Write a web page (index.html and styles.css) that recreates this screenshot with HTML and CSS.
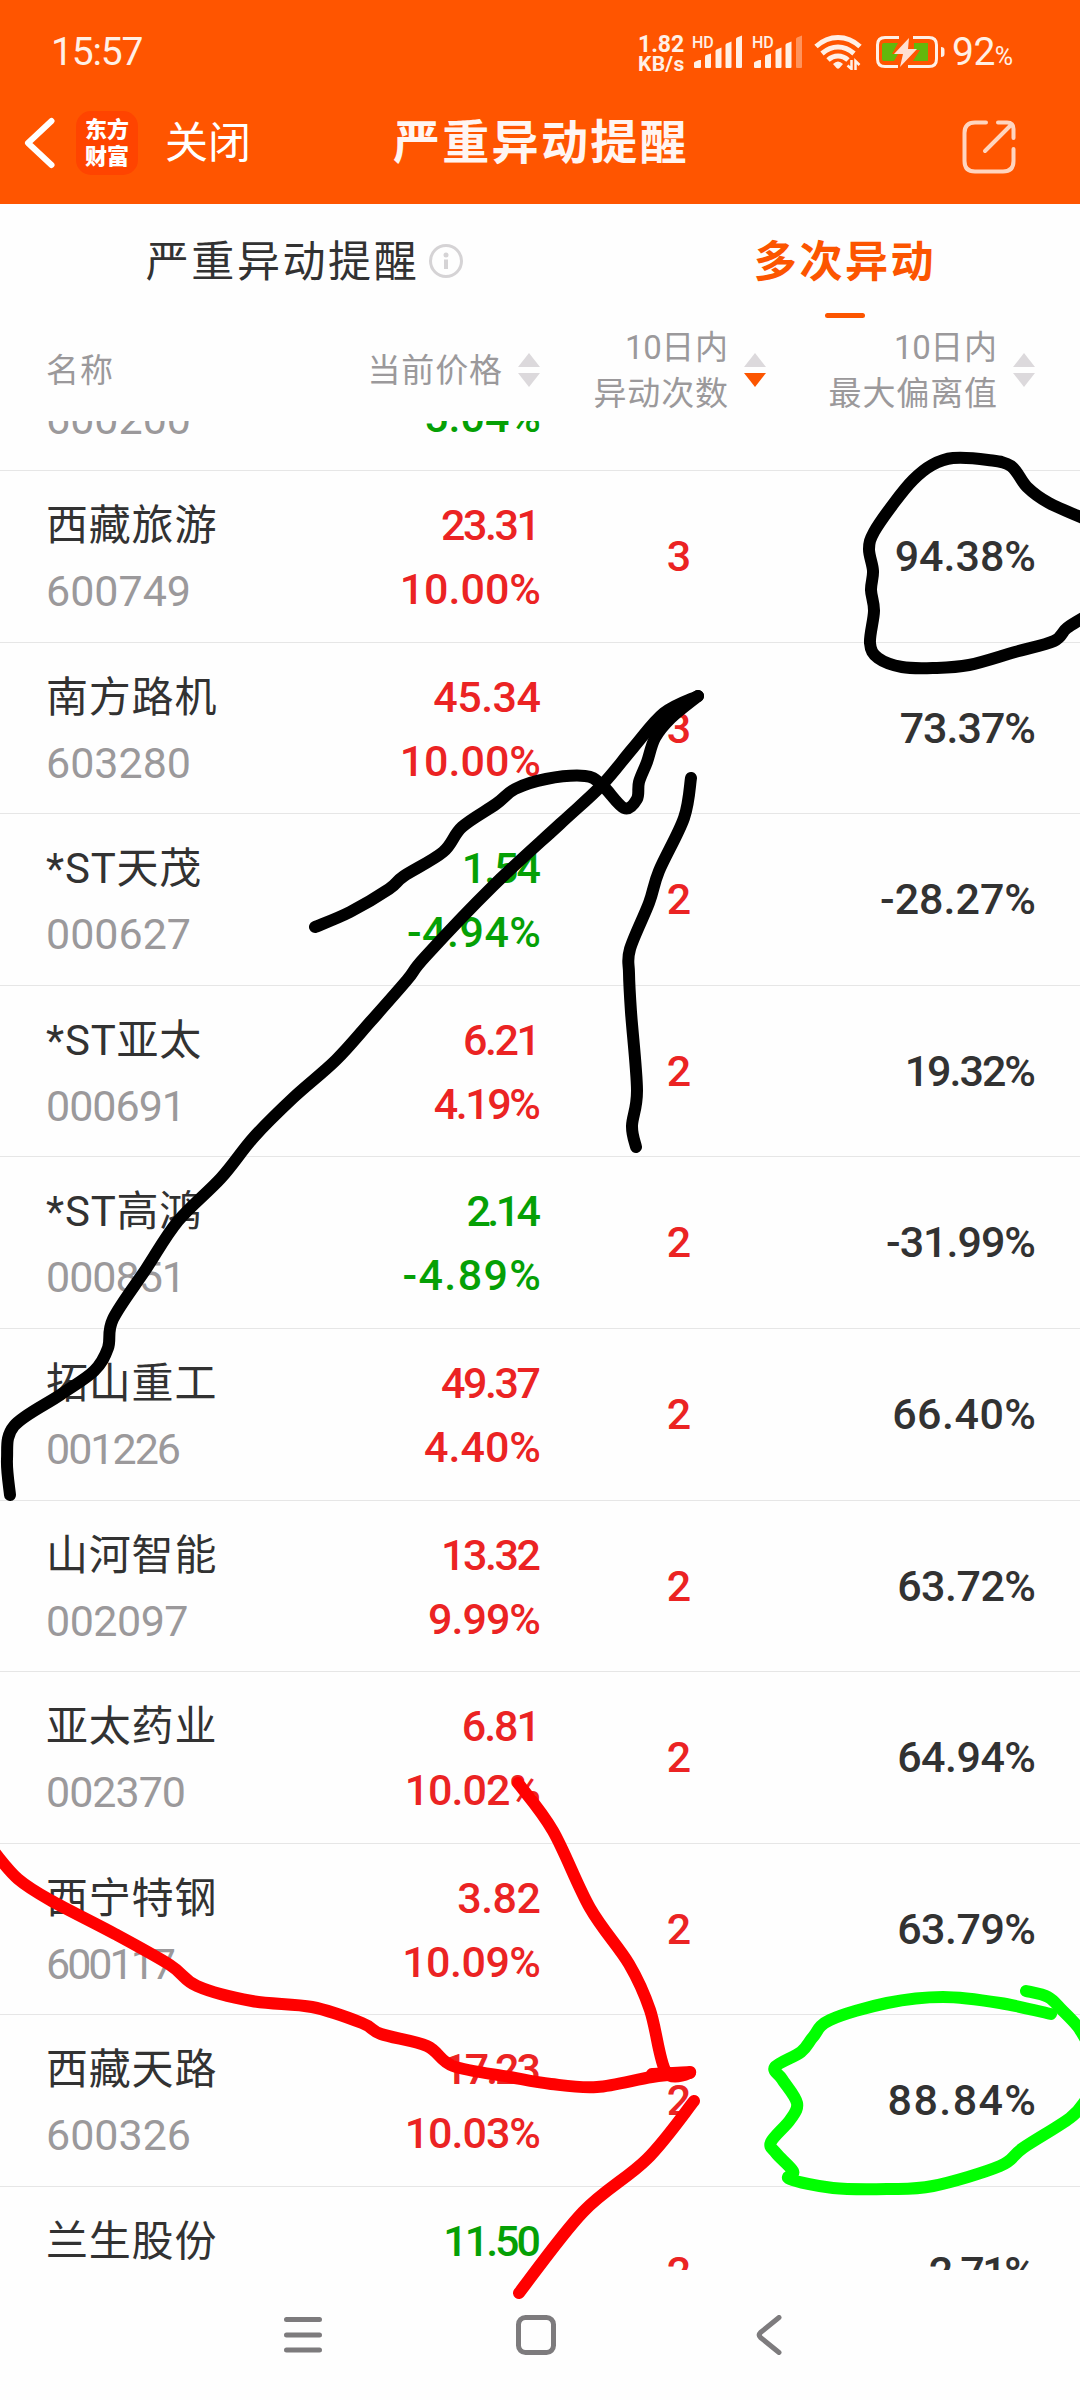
FILE: index.html
```html
<!DOCTYPE html>
<html lang="zh-CN">
<head>
<meta charset="utf-8">
<title>严重异动提醒</title>
<link rel="stylesheet" href="styles.css">
</head>
<body>
<div class="screen">
  <header class="top">
    <div class="status">
      <span class="time">15:57</span>
      <div class="rate"><span class="rate-num">1.82</span><span class="rate-unit">KB/s</span></div>
      <div class="signal"><span class="hd">HD</span>
        <svg width="50" height="34" viewBox="0 0 50 34"><path d="M1 32V28Q1 27 2 26.700L6 25H8V32Q8 33 7 33H2Q1 33 1 32ZM12 32V22Q12 20.500 13 20L18 18.500V32Q18 33 17 33H13Q12 33 12 32ZM22.500 32V16Q22.500 15 23.500 14.500L28.500 12.500V32Q28.500 33 27.500 33H23.500Q22.500 33 22.500 32ZM32.500 32V10Q32.500 9 33.500 8.500L38.500 6.500V32Q38.500 33 37.500 33H33.500Q32.500 33 32.500 32ZM43 32V4Q43 3 44 2.500L49 .5V32Q49 33 48 33H44Q43 33 43 32Z"/></svg>
      </div>
      <div class="signal second"><span class="hd">HD</span>
        <svg width="50" height="34" viewBox="0 0 50 34"><path d="M1 32V28Q1 27 2 26.700L6 25H8V32Q8 33 7 33H2Q1 33 1 32ZM12 32V22Q12 20.500 13 20L18 18.500V32Q18 33 17 33H13Q12 33 12 32ZM22.500 32V16Q22.500 15 23.500 14.500L28.500 12.500V32Q28.500 33 27.500 33H23.500Q22.500 33 22.500 32ZM32.500 32V10Q32.500 9 33.500 8.500L38.500 6.500V32Q38.500 33 37.500 33H33.500Q32.500 33 32.500 32Z"/><path class="weak" d="M43 32V4Q43 3 44 2.500L49 .5V32Q49 33 48 33H44Q43 33 43 32Z"/></svg>
      </div>
      <svg class="wifi" width="48" height="36" viewBox="0 0 48 36">
        <g fill="none" stroke="currentColor" stroke-width="5"><path d="M2 12.500Q12 3.500 24 3.500T46 12.500"/><path d="M8 19.500Q15.500 13 24 13T40 19.500"/><path d="M14 26Q18.500 22 24 22T34 26"/></g>
        <path d="M19 30Q24 25 29 30L25.500 34Q24 35.500 22.500 34Z"/>
        <path d="M37.500 26V35L33.500 31.500M41.500 36V27L45.500 31" fill="none" stroke="currentColor" stroke-width="2.500"/>
      </svg>
      <svg class="battery" width="72" height="36" viewBox="0 0 72 36">
        <path d="M25 3.500H11Q3.500 3.500 3.500 11V25Q3.500 32.500 11 32.500H24M39 3.500H55Q62.500 3.500 62.500 11V25Q62.500 32.500 55 32.500H34" fill="none" stroke="currentColor" stroke-width="3"/>
        <path d="M67 13Q70.500 13 70.500 16V20Q70.500 23 67 23Z"/>
        <path fill="#63b80c" d="M10 9H24L18 20H24L20 27H10Q8 27 8 25V11Q8 9 10 9ZM40 9H54V27H39L46 16H40Z"/>
        <path fill="#ffe0d2" d="M35 4L20 20H29L26 33L43 15H34Z"/>
      </svg>
      <span class="level">92<small>%</small></span>
    </div>
    <div class="bar">
      <svg class="back" width="32" height="54" viewBox="0 0 32 54"><path d="M28.500 5L5 27L28.500 49"/></svg>
      <div class="logo"><span>东方</span><span>财富</span></div>
      <span class="close">关闭</span>
      <h1 class="title">严重异动提醒</h1>
      <svg class="share" width="56" height="56" viewBox="0 0 56 56"><path d="M25 3.500H14Q3.500 3.500 3.500 14V42Q3.500 52.500 14 52.500H42Q52.500 52.500 52.500 42V30M37 3.500H46Q52.500 3.500 52.500 10V19M50.500 5.500L24 32"/></svg>
    </div>
  </header>

  <nav class="tabs">
    <div class="tab"><span class="tab-text">严重异动提醒</span>
      <svg class="info" width="36" height="36" viewBox="0 0 36 36"><circle cx="18" cy="18" r="15.500" fill="none" stroke="#d5d3d5" stroke-width="3"/><circle cx="18" cy="12" r="2.500"/><path d="M16 16.500H20V26H16Z"/></svg>
    </div>
    <div class="tab active"><span class="tab-text">多次异动</span></div>
  </nav>

  <div class="head">
    <div class="h-name">名称</div>
    <div class="h-cell"><span>当前价格</span><svg class="sort" width="22" height="34" viewBox="0 0 22 34"><path d="M11 0L22 14H0Z"/><path d="M11 34L22 20H0Z"/></svg></div>
    <div class="h-cell"><span><em>10</em>日内<br>异动次数</span><svg class="sort" width="22" height="34" viewBox="0 0 22 34"><path d="M11 0L22 14H0Z"/><path class="on" d="M11 34L22 20H0Z"/></svg></div>
    <div class="h-cell"><span><em>10</em>日内<br>最大偏离值</span><svg class="sort" width="22" height="34" viewBox="0 0 22 34"><path d="M11 0L22 14H0Z"/><path d="M11 34L22 20H0Z"/></svg></div>
  </div>

  <main class="list">
    <div class="row first"><div class="stock"><b></b><i>600200</i></div><div class="price down"><span></span><span>5.04%</span></div><div class="count"></div><div class="ratio"></div></div>
    <div class="row"><div class="stock"><b>西藏旅游</b><i>600749</i></div><div class="price"><span class="tight-5">23.31</span><span>10.00%</span></div><div class="count">3</div><div class="ratio">94.38%</div></div>
    <div class="row"><div class="stock"><b>南方路机</b><i>603280</i></div><div class="price"><span class="tight-1">45.34</span><span>10.00%</span></div><div class="count">3</div><div class="ratio tight-2">73.37%</div></div>
    <div class="row"><div class="stock"><b>*ST天茂</b><i>000627</i></div><div class="price down"><span class="tight-4">1.54</span><span class="loose-1">-4.94%</span></div><div class="count">2</div><div class="ratio">-28.27%</div></div>
    <div class="row"><div class="stock"><b>*ST亚太</b><i class="tight-2">000691</i></div><div class="price"><span class="tight-5">6.21</span><span class="tight-5">4.19%</span></div><div class="count">2</div><div class="ratio tight-4">19.32%</div></div>
    <div class="row"><div class="stock"><b>*ST高鸿</b><i class="tight-2">000851</i></div><div class="price down"><span class="tight-7">2.14</span><span class="loose-3">-4.89%</span></div><div class="count">2</div><div class="ratio tight-2">-31.99%</div></div>
    <div class="row"><div class="stock"><b>拓山重工</b><i class="tight-4">001226</i></div><div class="price"><span class="tight-5">49.37</span><span>4.40%</span></div><div class="count">2</div><div class="ratio loose-1">66.40%</div></div>
    <div class="row"><div class="stock"><b>山河智能</b><i class="tight-1">002097</i></div><div class="price"><span class="tight-5">13.32</span><span class="tight-2">9.99%</span></div><div class="count">2</div><div class="ratio tight-1">63.72%</div></div>
    <div class="row"><div class="stock"><b>亚太药业</b><i class="tight-2">002370</i></div><div class="price"><span class="tight-4">6.81</span><span class="tight-2">10.02%</span></div><div class="count">2</div><div class="ratio tight-1">64.94%</div></div>
    <div class="row"><div class="stock"><b>西宁特钢</b><i class="tight-6">600117</i></div><div class="price"><span class="tight-1">3.82</span><span class="tight-1">10.09%</span></div><div class="count">2</div><div class="ratio tight-1">63.79%</div></div>
    <div class="row"><div class="stock"><b>西藏天路</b><i>600326</i></div><div class="price"><span class="tight-6">17.23</span><span class="tight-2">10.03%</span></div><div class="count">2</div><div class="ratio loose-3">88.84%</div></div>
    <div class="row"><div class="stock"><b>兰生股份</b><i></i></div><div class="price down"><span class="tight-6">11.50</span><span></span></div><div class="count">2</div><div class="ratio tight-5">2.71%</div></div>
  </main>

  <footer class="nav">
    <svg width="40" height="40" viewBox="0 0 40 40"><path d="M3.500 4.500H36.500M3.500 20H36.500M3.500 35H36.500"/></svg>
    <svg width="40" height="40" viewBox="0 0 40 40"><rect x="2.500" y="2.500" width="35" height="35" rx="7"/></svg>
    <svg width="40" height="40" viewBox="0 0 40 40"><path d="M30 2.500L11.500 17.500Q9 20 11.500 22.500L30 37.500"/></svg>
  </footer>

  <svg class="ink" width="1080" height="2400" viewBox="0 0 1080 2400">
    <path class="black" data-points="1090,521 1049,503 1027,487 1011,466 988,460 953,458 932,465 913,480 894,503 874,532 869,549 873,571 871,590 874,611 870,643 878,658 902,667 933,668 969,665 1015,652 1054,641 1067,628 1090,614"/>
    <path class="black" data-points="315,927 350,912 389,889 404,876 443,852 462,827 496,804 515,789 546,779 585,776 602,785 624,808 637,799 639,782 647,762 655,738 671,718 698,696"/>
    <path class="black" data-points="698,696 664,713 633,748 602,785 560,824 493,886 425,957 407,980 371,1021 336,1060 293,1098 254,1137 221,1178 178,1221 146,1269 113,1319 108,1348 94,1371 60,1395 14,1426 7,1459 10,1495"/>
    <path class="black" data-points="691,778 684,818 659,871 649,903 630,949 629,973 631,1012 637,1090 632,1126 636,1147"/>
    <path class="red" data-points="-5,1853 18,1879 50,1900 115,1934 170,1965 197,1986 252,2001 312,2007 362,2023 381,2034 427,2046 453,2066 510,2077 551,2084 597,2087 652,2077 690,2073"/>
    <path class="red" data-points="518,1783 553,1831 590,1908 629,1964 650,2010 666,2072 690,2072 652,2074"/>
    <path class="red" data-points="694,2101 647,2159 583,2212 519,2293"/>
    <path class="green" data-points="1051,2014 1000,2003 943,1997 887,2003 830,2020 813,2037 801,2052 775,2067 782,2079 797,2103 790,2120 771,2142 776,2153 793,2171 790,2179 833,2188 887,2189 933,2186 1000,2166 1023,2148 1070,2118 1086,2100"/>
    <path class="green" data-points="1026,1991 1048,1997 1062,2010 1078,2027 1090,2047"/>
  </svg>
</div>
<script src="ink.js"></script>
</body>
</html>
```
FILE: ink.js
```
// Draws each pen stroke as a smooth curve through its sampled points.
document.querySelectorAll('.ink path').forEach(function (path) {
  var p = path.dataset.points.split(' ').map(function (s) { return s.split(',').map(Number); });
  var d = 'M' + p[0];
  for (var i = 0; i < p.length - 1; i++) {
    var a = p[i - 1] || p[i], b = p[i], c = p[i + 1], e = p[i + 2] || c;
    d += 'C' + [b[0] + (c[0] - a[0]) / 6, b[1] + (c[1] - a[1]) / 6,
                c[0] - (e[0] - b[0]) / 6, c[1] - (e[1] - b[1]) / 6, c[0], c[1]];
  }
  path.setAttribute('d', d);
});
```
FILE: styles.css
```css
* { box-sizing: border-box; margin: 0; padding: 0; }
body { background: #fff; font-family: Roboto, "Noto Sans CJK SC", sans-serif; color: #323232; }
svg { display: block; flex: none; }
.screen { position: relative; width: 1080px; height: 2400px; overflow: hidden; background: #fefefe; display: flex; flex-direction: column; }

.top { height: 204px; background: #ff5500; color: #fff0e6; }
.status { height: 104px; display: flex; padding-left: 51px; fill: currentColor; }
.time { width: 587px; font-size: 39px; line-height: 105px; letter-spacing: -1.2px; }
.rate { width: 53px; padding-top: 33px; font-weight: 700; white-space: nowrap; }
.rate span { display: block; }
.rate-num { font-size: 23px; line-height: 23px; letter-spacing: 0; }
.rate-unit { font-size: 21px; line-height: 16px; letter-spacing: .3px; }
.signal { position: relative; width: 60px; padding: 35px 0 0 2px; }
.signal .hd { position: absolute; left: 1px; top: 34px; font-size: 16px; line-height: 18px; font-weight: 500; }
.weak { opacity: .4; }
.wifi { margin: 34px 0 0 3px; }
.battery { margin: 34px 0 0 12px; }
.level { font-size: 39px; line-height: 105px; margin-left: 6px; letter-spacing: -.5px; }
.level small { font-size: 25px; }

.bar { height: 78px; display: flex; align-items: center; padding-left: 23px; }
.back { fill: none; stroke: #fff; stroke-width: 6; stroke-linecap: round; stroke-linejoin: round; }
.logo { width: 62px; height: 64px; margin-left: 21px; border-radius: 15px; background: #ff4400; color: #fff; font-size: 22px; font-weight: 900; line-height: 27px; display: flex; flex-direction: column; align-items: center; justify-content: center; }
.close { width: 228px; margin-left: 27px; font-size: 43px; line-height: 60px; color: #fff; }
.title { width: 568px; font-size: 47px; line-height: 60px; font-weight: 700; letter-spacing: 2.3px; color: #fff5f2; }
.share { margin-top: 8px; fill: none; stroke: #ffd5bf; stroke-width: 4; stroke-linecap: round; stroke-linejoin: round; }

.tabs { height: 114px; display: grid; grid-template-columns: 610px 470px; font-size: 43px; letter-spacing: 2.6px; }
.tab { display: flex; justify-content: center; padding-top: 26px; line-height: 64px; }
.info { margin: 13px 0 0 9px; fill: #d5d3d5; }
.active { position: relative; font-weight: 700; color: #fc5500; }
.active::after { content: ""; position: absolute; left: 215px; top: 109px; width: 40px; height: 5px; border-radius: 3px; background: #fc5500; }

.head { height: 103px; display: grid; grid-template-columns: 340px 200px 226px 269px; align-items: center; color: #9b999b; font-size: 33px; line-height: 46px; letter-spacing: .9px; }
.head em { font-style: normal; letter-spacing: -.5px; }
.head .h-name, .head span { padding-top: 2px; }
.h-name { padding-left: 46px; }
.h-cell { display: flex; justify-content: flex-end; align-items: center; gap: 15px; text-align: right; }
.sort { fill: #dcd9dc; }
.sort .on { fill: #fc5500; }

.list { height: 1849px; overflow: hidden; }
.row { height: 171.6px; border-top: 1px solid #e6e6e6; display: grid; grid-template-columns: 340px 201px 276px 219px; font-size: 43px; }
.row.first { margin-top: -122.6px; }
.stock { padding: 22px 0 0 46px; }
.stock b, .stock i { display: block; font-weight: 400; font-style: normal; height: 65px; line-height: 66px; }
.stock b { font-size: 42px; letter-spacing: .8px; }
.stock i { color: #9b999b; }
.price { padding-top: 22px; font-weight: 500; text-align: right; color: #eb2323; }
.price span { display: block; height: 64px; line-height: 64px; }
.price.down { color: #05a005; }
.count, .ratio { line-height: 171px; font-weight: 500; }
.count { text-align: center; color: #eb2323; }
.ratio { text-align: right; }

.loose-3 { letter-spacing: 1.4px; margin-right: -1.4px; }
.loose-1 { letter-spacing: .5px; margin-right: -.5px; }
.tight-1 { letter-spacing: -.5px; margin-right: .5px; }
.tight-2 { letter-spacing: -1px; margin-right: 1px; }
.tight-4 { letter-spacing: -2px; margin-right: 2px; }
.tight-5 { letter-spacing: -2.4px; margin-right: 2.4px; }
.tight-6 { letter-spacing: -3px; margin-right: 3px; }
.tight-7 { letter-spacing: -3.6px; margin-right: 3.6px; }

.nav { height: 130px; padding: 45px 0 0 283px; display: flex; gap: 193px; fill: none; stroke: #7d7b7d; stroke-width: 5; stroke-linecap: round; stroke-linejoin: round; }

.ink { position: absolute; left: 0; top: 0; fill: none; stroke-width: 12; stroke-linecap: round; stroke-linejoin: round; }
.black { stroke: #000; }
.red { stroke: #f00; }
.green { stroke: #0f0; }
```
